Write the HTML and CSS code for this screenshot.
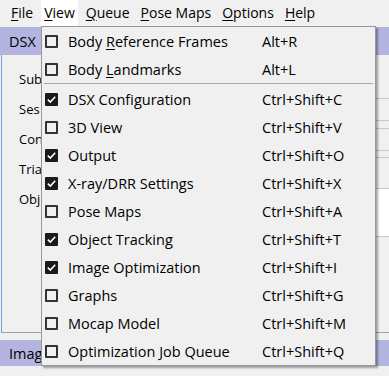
FILE: index.html
```html
<!DOCTYPE html>
<html>
<head>
<meta charset="utf-8">
<link rel="stylesheet" href="styles.css">
</head>
<body>
<div class="app">
  <nav class="menubar">
    <span class="mi"><u>F</u>ile</span>
    <span class="mi open"><u>V</u>iew</span>
    <span class="mi"><u>Q</u>ueue</span>
    <span class="mi"><u>P</u>ose Maps</span>
    <span class="mi"><u>O</u>ptions</span>
    <span class="mi"><u>H</u>elp</span>
  </nav>
  <div class="workspace">
    <div class="bar">DSX</div>
    <div class="panel">
      <div class="row"><span class="lbl">Sub</span></div>
      <div class="row"><span class="lbl">Ses</span><span class="field"></span></div>
      <div class="row"><span class="lbl">Con</span><span class="field"></span></div>
      <div class="row"><span class="lbl">Tria</span><span class="field tall"></span></div>
      <div class="row"><span class="lbl">Obj</span><span class="field list"></span></div>
    </div>
    <div class="bar bottom">Imag</div>
  </div>

  <div class="dropdown">
    <div class="item"><span class="cb"></span><span class="label">Body <u>R</u>eference Frames</span><span class="key">Alt+R</span></div>
    <div class="item"><span class="cb"></span><span class="label">Body <u>L</u>andmarks</span><span class="key">Alt+L</span></div>
    <div class="sep"></div>
    <div class="item"><span class="cb on"><svg viewBox="0 0 13 13"><polyline points="2.8,6.6 5.3,9 10.2,3.8"/></svg></span><span class="label">DSX Configuration</span><span class="key">Ctrl+Shift+C</span></div>
    <div class="item"><span class="cb"></span><span class="label">3D View</span><span class="key">Ctrl+Shift+V</span></div>
    <div class="item"><span class="cb on"><svg viewBox="0 0 13 13"><polyline points="2.8,6.6 5.3,9 10.2,3.8"/></svg></span><span class="label">Output</span><span class="key">Ctrl+Shift+O</span></div>
    <div class="item"><span class="cb on"><svg viewBox="0 0 13 13"><polyline points="2.8,6.6 5.3,9 10.2,3.8"/></svg></span><span class="label">X-ray/DRR Settings</span><span class="key">Ctrl+Shift+X</span></div>
    <div class="item"><span class="cb"></span><span class="label">Pose Maps</span><span class="key">Ctrl+Shift+A</span></div>
    <div class="item"><span class="cb on"><svg viewBox="0 0 13 13"><polyline points="2.8,6.6 5.3,9 10.2,3.8"/></svg></span><span class="label">Object Tracking</span><span class="key">Ctrl+Shift+T</span></div>
    <div class="item"><span class="cb on"><svg viewBox="0 0 13 13"><polyline points="2.8,6.6 5.3,9 10.2,3.8"/></svg></span><span class="label">Image Optimization</span><span class="key">Ctrl+Shift+I</span></div>
    <div class="item"><span class="cb"></span><span class="label">Graphs</span><span class="key">Ctrl+Shift+G</span></div>
    <div class="item"><span class="cb"></span><span class="label">Mocap Model</span><span class="key">Ctrl+Shift+M</span></div>
    <div class="item"><span class="cb"></span><span class="label">Optimization Job Queue</span><span class="key">Ctrl+Shift+Q</span></div>
  </div>
</div>
</body>
</html>
```

FILE: styles.css
```css
html, body {
  margin: 0;
  padding: 0;
  background: #f0f0f0;
}
body {
  width: 389px;
  height: 376px;
  overflow: hidden;
  font-family: "Open Sans", "Noto Sans", "DejaVu Sans", sans-serif;
  color: #000;
}
.app {
  position: relative;
  width: 389px;
  height: 376px;
  overflow: hidden;
}
u { text-decoration: underline; text-underline-offset: 2px; text-decoration-thickness: 1px; }

.menubar {
  display: flex;
  height: 26px;
  align-items: stretch;
  font-size: 14px;
  padding-left: 8px;
  gap: 5px;
  background: #f0f0f0;
}
.mi {
  display: flex;
  align-items: center;
  padding: 0 3px 2px;
}
.mi.open { background: #fff; }

.workspace {
  display: flex;
  flex-direction: column;
  height: 340px;
}
.bar {
  height: 28px;
  margin-top: 1px;
  background: #b4b4e0;
  font-size: 14.5px;
  display: flex;
  align-items: center;
  padding-left: 9px;
  flex: none;
  white-space: nowrap;
}
.panel {
  flex: 1;
  margin-left: 1px;
  border-left: 1px solid #6f9fdc;
  border-bottom: 1px solid #a0a0a0;
  margin-bottom: 7px;
  padding-top: 9px;
  font-size: 13px;
  display: flex;
  flex-direction: column;
}
.row {
  display: flex;
  align-items: center;
  height: 30px;
  padding-left: 17px;
}
.lbl { width: 23px; margin-right: 80px; white-space: nowrap; }
.field {
  flex: 1;
  height: 21px;
  border-top: 1px solid #c8c8c8;
  border-bottom: 1px solid #c8c8c8;
}
.field.tall {
  align-self: flex-start;
  margin-top: 3px;
  height: 30px;
}
.field.list {
  align-self: flex-start;
  margin-top: 5px;
  height: 47px;
  background: #fff;
  border-top: none;
}
.bar.bottom { height: 26px; margin-top: 0; }

.dropdown {
  position: absolute;
  left: 41px;
  top: 26px;
  width: 333px;
  background: #f0f0f0;
  border: 1px solid #979797;
  box-shadow: 2px 2px 2px rgba(0,0,0,0.35);
  font-size: 14.5px;
}
.item {
  display: flex;
  align-items: center;
  height: 28px;
  padding-left: 3px;
  white-space: nowrap;
}
.cb {
  width: 13px;
  height: 13px;
  box-sizing: border-box;
  border: 2px solid #333;
  border-radius: 1px;
  margin-right: 10px;
  flex: none;
  display: flex;
}
.cb.on {
  background: #1a1a1a;
  border-color: #1a1a1a;
}
.cb svg {
  width: 13px;
  height: 13px;
  margin: -2px;
}
.cb svg polyline {
  fill: none;
  stroke: #fff;
  stroke-width: 1.6;
}
.label { width: 194px; }
.sep {
  height: 1px;
  background: #a8a8a8;
  margin: 0 2px 1px 2px;
}
```
